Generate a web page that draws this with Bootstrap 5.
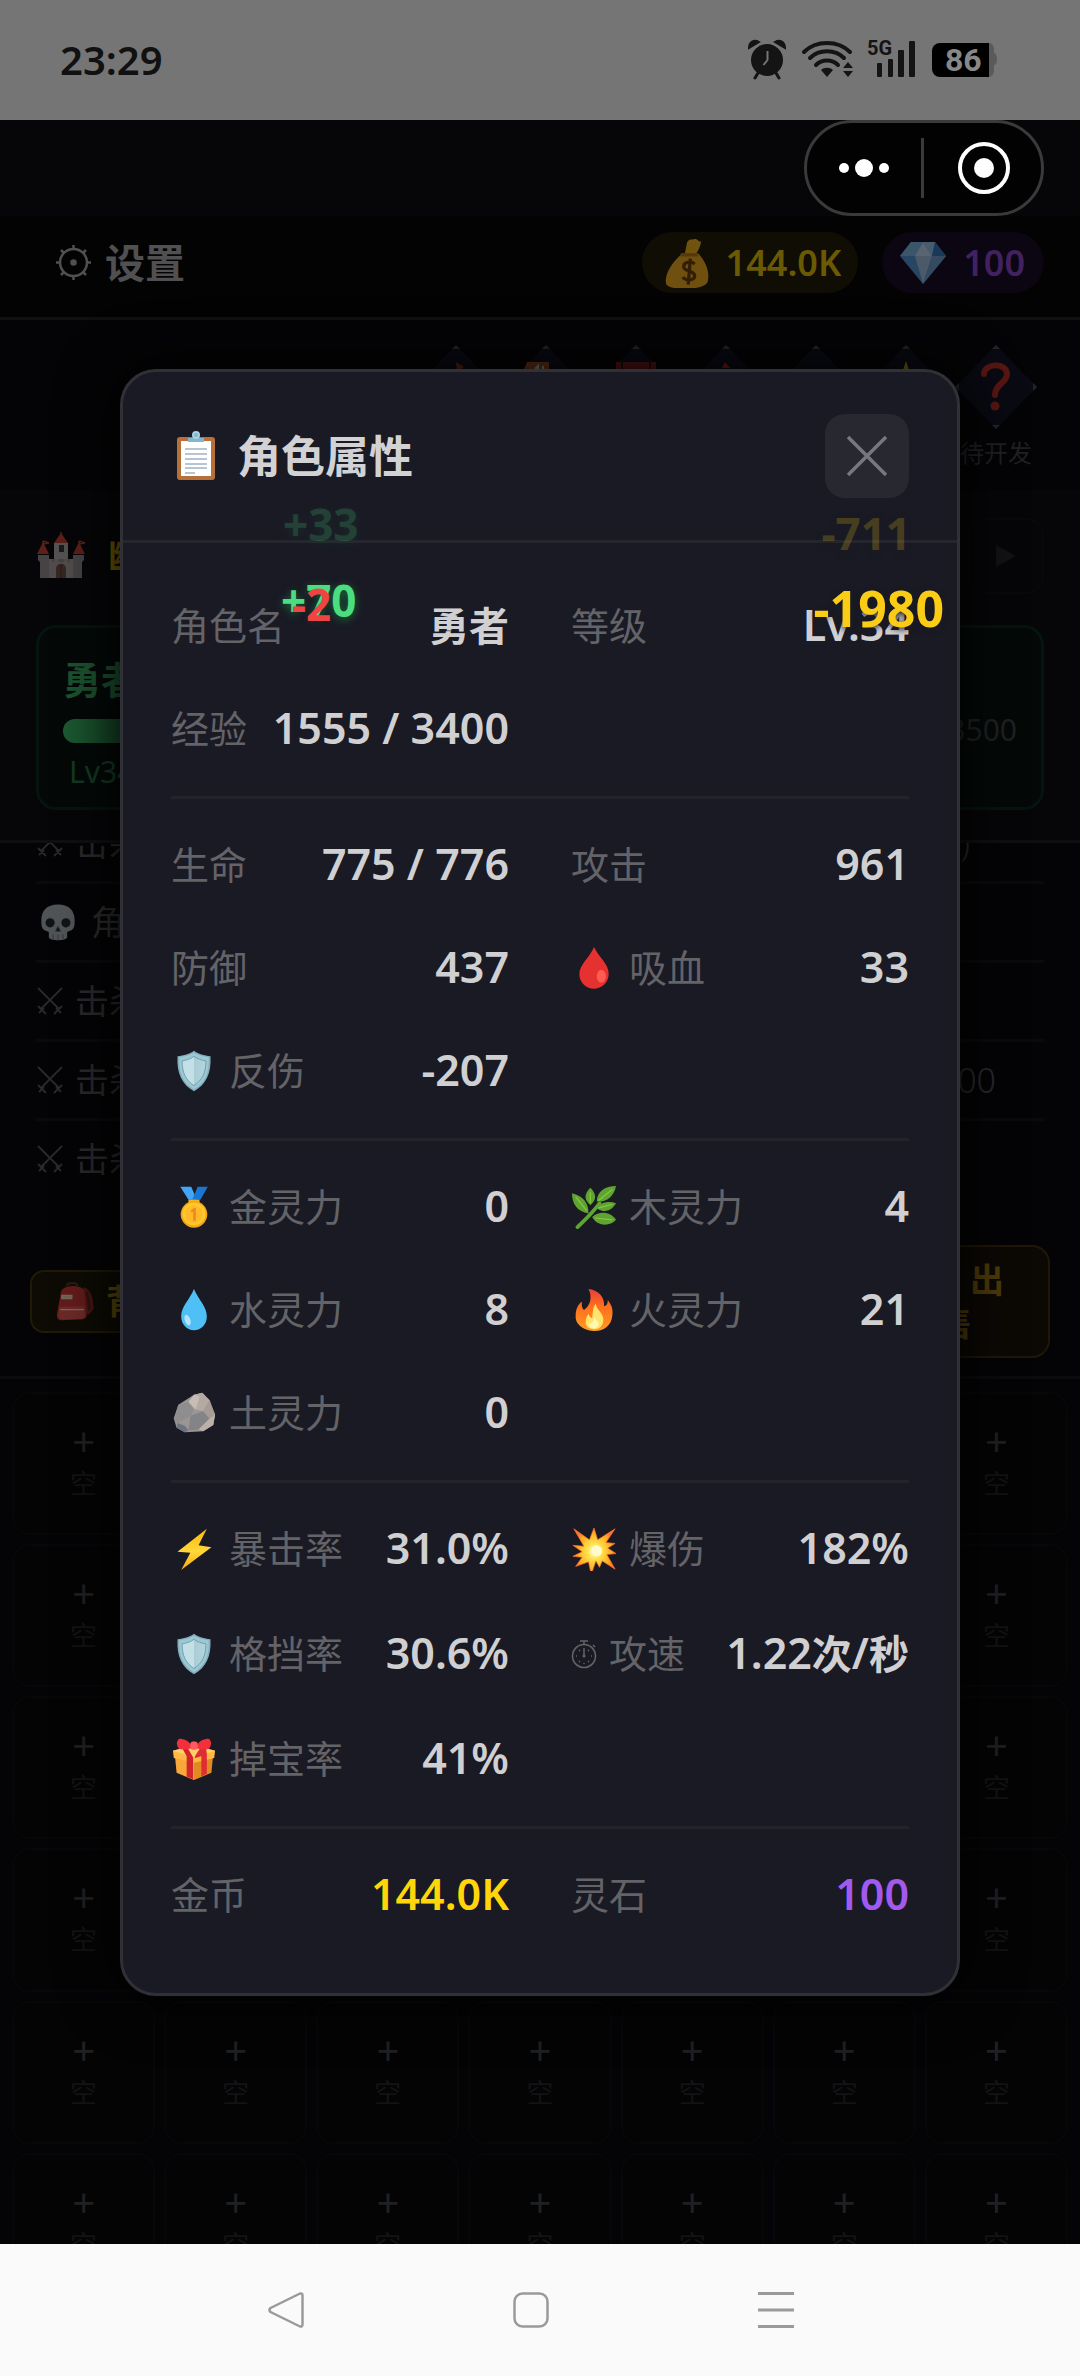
<!DOCTYPE html>
<html lang="zh-CN">
<head>
<meta charset="utf-8">
<meta name="viewport" content="width=device-width, initial-scale=1">
<title>角色属性</title>
<link href="https://cdn.jsdelivr.net/npm/bootstrap@5.3.0/dist/css/bootstrap.min.css" rel="stylesheet">
<style>
body{height:100vh;background:#040406;font-family:"Noto Sans","Noto Sans CJK SC",sans-serif;color:#4a4a4c;overflow:hidden}
svg{display:block;flex:none}
button{font-family:inherit}
.status-bar{height:120px;background:#757575;color:#111;padding:0 79px 0 60px}
.clock{font-size:40px;font-weight:600;line-height:40px}
.game{flex:1 1 0;min-height:0;overflow:hidden;position:relative}
.game-page>*{flex-shrink:0}
.capsule-row{background:#060609;padding-right:36px}
.capsule{width:240px;height:96px;border:3px solid #3a3a3a;border-radius:48px;background:#020202}
.top-row{background:#030304;border-bottom:3px solid #101013;padding:16px 36px 24px 54px}
.plain-btn{background:none;border:0;padding:0;color:#505052;font-size:40px;font-weight:700;line-height:61px;gap:12px}
.pill{height:61px;border-radius:31px;font-size:36px;font-weight:600;gap:16px}
.pill-gold{background:#100d04;color:#6b5a04;padding:0 17px 0 20px}
.pill-gem{background:#0b0611;color:#41215f;padding:0 19px 0 17px}
.dim{opacity:.42}
.quests{gap:8px;padding:25px 43px 0 0;height:170px}
.quest{width:82px}
.quest span{font-size:24px;line-height:24px;color:#202022;white-space:nowrap;margin-top:12px}
.battle{background:#060608;padding:28px 36px 30px;border-bottom:3px solid #0f0f12}
.place{font-size:36px;font-weight:700;color:#6b5a04;gap:22px}
.next-btn{width:76px;height:76px;border:2px solid #09090b;border-radius:18px;background:#060608;color:#121214;padding:0}
.fighter{margin-top:31px;height:185px;border:3px solid #06140f;border-radius:20px;background:#040908;padding:12px 24px 0}
.fighter-name{font-size:38px;font-weight:700;line-height:36px;color:#1c5230}
.hp{height:24px;border-radius:12px;width:400px;background:#08130d;margin:22px 0 14px}
.hp .progress-bar{background:linear-gradient(90deg,#1c5a32 0,#123f22 20%)}
.fighter-level{font-size:30px;line-height:30px;color:#143a22;padding-left:6px}
.fighter-exp{font-size:30px;color:#202022;padding-top:12px}
.logs{height:357px;overflow:hidden;padding:0 36px}
.logs li{height:79px;flex:none;border-bottom:3px solid #0a0a0c;font-size:34px;color:#2a2a2c;gap:11px}
.logs li:last-child{border-bottom-color:transparent}
.logs .tail{margin-left:auto;font-size:34px;font-weight:300;padding-right:48px}
.logs .tail-far{padding-right:74px}
.tools{padding:45px 30px 18px;border-bottom:3px solid #0b0b0e}
.bag-btn{height:63px;border:2px solid #1f1b06;border-radius:14px;background:#0d0b04;color:#5a4a08;font-size:34px;font-weight:600;gap:10px;padding:0 24px}
.sell-btn{width:190px;height:113px;border:2px solid #1f1708;border-radius:18px;background:#0c0905;color:#4e3b09;font-size:34px;font-weight:600;line-height:43px;padding:0}
.bag{display:grid;grid-template-columns:repeat(7,1fr);gap:9px;padding:13px 12px}
.slot{aspect-ratio:1;border:2px solid #070709;border-radius:18px;background:#040405;color:#131315;font-size:27px;line-height:40px;padding-bottom:5px}
.slot b{font-size:40px;font-weight:400;line-height:46px;color:#202022}
.overlay{position:absolute;inset:0}
.sheet{width:calc(100% - 240px);max-width:840px;background:#1a1a24;border:3px solid #303036;border-radius:36px;box-shadow:0 0 60px #000;position:relative}
.sheet-head{padding:42px 48px;border-bottom:3px solid #26262f}
.sheet-title{font-size:44px;font-weight:700;line-height:84px;color:#d2d2d4;gap:16px;margin:0}
.close-btn{width:84px;height:84px;border:0;border-radius:20px;background:#282830;padding:0}
.sheet-body{padding:48px 48px 63px}
.stats{display:grid;grid-template-columns:1fr 1fr;column-gap:62px;row-gap:33px;padding-bottom:32px;margin:0 0 31px;border-bottom:3px solid #23232c}
.stats.tall{row-gap:35px}
.stats:last-child{border:0;padding:0;margin:0}
.stat{height:70px;white-space:nowrap}
.stat dt{font-size:38px;font-weight:400;color:#636368;gap:12px}
.stat dd{font-size:43px;font-weight:600;color:#d0d0d3;margin:0}
.stat .han{font-size:40px}
.stat .gold{color:#ffd60a}
.stat .violet{color:#a259f0}
.float-hit{position:absolute;font-weight:700;font-size:44px;line-height:44px}
.heal{color:#4ade80;text-shadow:0 2px 8px #16703a}
.hurt{color:#ef4444}
.crit{color:#facc15;font-size:50px;text-shadow:0 2px 6px #1a1a24}
.crit.faded{font-size:44px}
.faded{opacity:.2}
.hit-a{left:160px;top:130px}
.hit-b{left:158px;top:206px}
.hit-c{left:169px;top:210px}
.hit-d{right:46px;top:139px}
.hit-e{right:13px;top:214px}
.sys-nav{height:132px;background:#fafafa;gap:209px;padding-right:18px}
.sys-nav button{background:none;border:0;padding:0}
</style>
<script src="https://cdn.jsdelivr.net/npm/bootstrap@5.3.0/dist/js/bootstrap.bundle.min.js"></script>
</head>
<body class="d-flex flex-column">

<svg width="0" height="0" class="position-absolute" aria-hidden="true">
<defs>
<linearGradient id="gSteel" x1="0" x2="1"><stop offset="0" stop-color="#c3e0e7"/><stop offset=".5" stop-color="#c3e0e7"/><stop offset=".5" stop-color="#a9ccd5"/><stop offset="1" stop-color="#b5d5dd"/></linearGradient>
<linearGradient id="gFire" x1="0" x2="0" y1="0" y2="1"><stop offset="0" stop-color="#e53f3c"/><stop offset=".4" stop-color="#ff6d1c"/><stop offset="1" stop-color="#ff9b24"/></linearGradient>
<radialGradient id="gBoom"><stop offset="0" stop-color="#fffde0"/><stop offset=".35" stop-color="#ffe14a"/><stop offset=".8" stop-color="#ffab1f"/><stop offset="1" stop-color="#ff7a30"/></radialGradient>
<linearGradient id="gBolt" x1="0" x2="0" y1="0" y2="1"><stop offset="0" stop-color="#feb804"/><stop offset=".55" stop-color="#ffd83b"/><stop offset="1" stop-color="#fca80c"/></linearGradient>
</defs>
<symbol id="e-clip" viewBox="0 0 48 52"><rect x="5" y="7" width="38" height="43" rx="3" fill="#b8703a"/><path d="M9 11h30v35H9z" fill="#fff"/><path d="M16 12V8h5c0-4 1-6 3-6s3 2 3 6h5v4z" fill="#82b6cc"/><circle cx="24" cy="5" r="3" fill="none" stroke="#a9d3e2" stroke-width="2"/><path d="M13 19h22M13 24h22M13 29h22M13 34h22M13 38h22M13 43h10" stroke="#9fb2c2" stroke-width="1.4"/></symbol>
<symbol id="e-shield" viewBox="0 0 48 48"><path d="M24 2c5 4 11 5 18 6 1 19-5 31-18 38C11 39 5 27 6 8c7-1 13-2 18-6z" fill="#84b0bd"/><path d="M24 4c5 3 10 4 16 5 1 17-4 28-16 35C12 37 7 26 8 9c6-1 11-2 16-5z" fill="#9cc8d4"/><path d="M24 8c4 3 8 4 13 5 0 13-4 21-13 27-9-6-13-14-13-27 5-1 9-2 13-5z" fill="url(#gSteel)" stroke="#6f9aa8" stroke-width="1"/></symbol>
<symbol id="e-blood" viewBox="0 0 48 48"><path d="M24 1c5 11 16 18 16 29a16 16 0 0 1-32 1C8 20 19 13 24 1z" fill="#e5312f"/><ellipse cx="32" cy="33" rx="5" ry="7" fill="#ff5b52"/></symbol>
<symbol id="e-water" viewBox="0 0 48 48"><path d="M24 1c5 12 14 19 14 30a14 15 0 0 1-28 0C10 20 19 13 24 1z" fill="#4fc0f5"/><ellipse cx="17" cy="35" rx="3" ry="6" transform="rotate(-20 17 35)" fill="#b3e5fc"/></symbol>
<symbol id="e-medal" viewBox="0 0 48 48"><path d="M9 2h12l6 14h-9z" fill="#42a5f5"/><path d="M39 2H28l-6 14h9z" fill="#1976d2"/><path d="M18 16h12v4H18z" fill="#f7b51c"/><circle cx="24" cy="32" r="14.500" fill="#f4a51c"/><circle cx="24" cy="31.500" r="12.500" fill="#ffca28"/><circle cx="24" cy="32" r="9.500" fill="#ffb92a"/><path d="M20.500 28l3.500-3h2v14h-3V29l-2 1z" fill="#ee8b1c"/></symbol>
<symbol id="e-herb" viewBox="0 0 48 48"><path d="M6 46C14 38 21 32 30 20" stroke="#5ea534" stroke-width="4" fill="none" stroke-linecap="round"/><g fill="#5fa332"><path d="M48 1c-12 0-21 6-21 17 11 1 19-6 21-17z"/><path d="M20 3c-7 7-7 13 0 19 7-6 7-12 0-19z"/><path d="M0 9c0 12 6 20 18 22 0-12-6-19-18-22z"/><path d="M48 20c-8-3-17-1-21 5 7 6 16 4 21-5z"/><path d="M48 38c-6-9-18-10-26-3 5 10 19 11 26 3z"/></g><path d="M44 5L29 17M20 8v12M4 13l12 15M44 21l-15 4M44 38l-19-2" stroke="#8cc63f" stroke-width="1.300" fill="none"/></symbol>
<symbol id="e-fire" viewBox="0 0 48 48"><path d="M18 1c10 1 18 8 17 19 3-1 4-3 4-7 4 5 6 10 5 17-1 11-9 17-19 17S3 41 4 30c0-7 3-13 7-15-1 4 0 7 2 9 8-6 9-15 5-23z" fill="url(#gFire)"/><path d="M26 17c0 7 10 11 8 20-1 5-5 8-10 8s-10-3-9-9c0-4 2-6 3-8 1 3 2 4 4 5 1-6 0-10 4-16z" fill="#ffe36b"/><path d="M24 31c1 4 6 5 5 9-1 3-3 4-5 4-3 0-6-2-5-6 2 2 5-1 5-7z" fill="#fff8b5"/></symbol>
<symbol id="e-rock" viewBox="0 0 48 48"><path d="M2 30L7 15 24 4l9-2 8 8 6 16-2 11-11 7-20 1L5 40z" fill="#9c9692"/><path d="M24 4l9-2 8 8-7 12-10-2-6-8z" fill="#b4aaa4"/><path d="M7 15l11-3 6 8-4 7-14 8-4-5z" fill="#8f8e8e"/><path d="M18 12l6-8 6 2-4 14z" fill="#c7bdb6"/><path d="M20 27l14-5 7 8-12 12-11 1z" fill="#828487"/><path d="M41 10l6 16-6 4-7-8z" fill="#a79c95"/><path d="M41 30l6-4-2 11-11 7-5-2z" fill="#bcb0a7"/><path d="M5 40l1-5 8 3 4 5-4 2z" fill="#6b7480"/></symbol>
<symbol id="e-bolt" viewBox="0 0 48 48"><path d="M38 2L6 27l14 1-10 19 33-25-14-2z" fill="url(#gBolt)"/></symbol>
<symbol id="e-boom" viewBox="0 0 48 48"><path d="M24 1l4 13L47 2 37 17l10 1-8 5 9 6-10 1 9 16-14-9-3 7-4-7-5 15-3-14-14 5 7-10-10-1 10-5-10-7 12 1L2 2l17 12z" fill="url(#gBoom)" stroke="#ff6a2c" stroke-width=".8"/><circle cx="27" cy="26" r="6" fill="#fffbd0"/></symbol>
<symbol id="e-gift" viewBox="0 0 48 48"><path d="M3 18l21 6v23L5 39z" fill="#f9a63a"/><path d="M45 18l-21 6v23l19-8z" fill="#e28a22"/><path d="M1 15l23-6 23 6-1 8-22 5L2 23z" fill="#ffb843"/><path d="M1 15l23 7 23-7-23-6z" fill="#ffd06a"/><path d="M11 12l5-2 7 12v24l-7-3V21z" fill="#d3242d"/><path d="M37 12l-5-2-7 11v2l7-2v22l6-3V18z" fill="#e02c34"/><path d="M23 12c-4-8-10-10-15-10-4 3-3 8 0 11 5 1 10 0 15-1zM25 12c4-8 10-10 15-10 4 3 3 8 0 11-5 1-10 0-15-1z" fill="#f2303b"/><rect x="20" y="5" width="8" height="9" rx="3" fill="#ff5a5f"/></symbol>
<symbol id="e-watch" viewBox="0 0 26 30"><circle cx="13" cy="17" r="11.500" fill="none" stroke="currentColor" stroke-width="1.600"/><path d="M13 5V2M9 2h8M22 6l2 2M13 9v8M5 17h1M20 17h1M13 24v1M8 11l1 1M18 11l-1 1M8 23l1-1M18 23l-1-1" stroke="currentColor" stroke-width="1.500"/><circle cx="13" cy="17" r="1.500" fill="currentColor"/></symbol>
<symbol id="e-bagmoney" viewBox="4 0 42 46"><path d="M24 14L26 4c2-4 5-2 7-3 3-1 3 3 6 2-1 5-2 8-6 13z" fill="#f2b51f"/><path d="M22 14h14c7 7 11 17 9 26-2 8-32 9-38 3-3-9 6-22 15-29z" fill="#f4ad1c"/><path d="M20 14h16v3H20z" fill="#b97314"/><path d="M33 24c-3-3-11-2-10 3 1 4 10 3 10 8 0 4-8 5-11 1M29 19l-2 24" stroke="#5f3708" stroke-width="3" fill="none"/></symbol>
<symbol id="e-gem" viewBox="0 2 48 46"><path d="M12 4h24l11 14-23 28L1 18z" fill="#4f9fd4"/><path d="M12 4h12l-8 14H1z" fill="#7fc4e8"/><path d="M24 4l9 14H16z" fill="#c5e6f5"/><path d="M24 4h12l-3 14z" fill="#9dd2ee"/><path d="M16 18h17l-9 28z" fill="#a5cbe0"/><path d="M33 18h14L24 46z" fill="#6aa9d0"/><path d="M36 4l11 14H33z" fill="#2f7fc0"/></symbol>
<symbol id="e-castle" viewBox="0 0 48 48"><path d="M24 1l7 10H17zM6 10l6 12H0zM42 10l6 12H36z" fill="#d8432f"/><path d="M24 0v3M6 9v4M6 9l6 2-6 1M42 9v4M42 9l6 2-6 1" stroke="#c3432f" stroke-width="1.500"/><path d="M17 11h14v18H17z" fill="#c3bcb8"/><path d="M1 23h11v4h24v-4h11v5l-2 2v16H3V30l-2-2z" fill="#9d9794"/><path d="M12 27h3v3h3v-3h3v3h6v-3h3v3h3v-3h3v19H12z" fill="#b7afab"/><path d="M22 13h5v7h-5z" fill="#353b40"/><path d="M19 46V37c0-7 10-7 10 0v9z" fill="#7b5347"/><path d="M24 33v13" stroke="#553a32"/></symbol>
<symbol id="e-skull" viewBox="0 0 48 48"><path d="M24 3C10 3 4 11 4 22c0 5 0 10 4 12l5 2v7c3 4 19 4 22 0v-7l5-2c4-2 4-7 4-12C44 11 38 3 24 3z" fill="#b9c3c6"/><circle cx="14.500" cy="25" r="5.500" fill="#26292b"/><circle cx="33.500" cy="25" r="5.500" fill="#26292b"/><path d="M24 29l3 6h-6zM18 39v6M24 39v7M30 39v6" fill="#26292b" stroke="#626b6e"/></symbol>
<symbol id="e-swords" viewBox="0 0 28 30"><path d="M2 2l21 21M26 2L5 23M2 20l8 8M26 20l-8 8M3 27l5-5M25 27l-5-5" stroke="currentColor" stroke-width="1.800" fill="none"/></symbol>
<symbol id="e-pack" viewBox="2 0 46 48"><path d="M34 6c9 3 12 14 12 27l-6 6-6-5z" fill="#9e2027"/><path d="M37 12c4 6 4 14 4 22" stroke="#4f2126" stroke-width="3" fill="none"/><path d="M7 12C8 3 33 2 35 11l3 28c0 4-3 6-8 6L8 46c-5 0-6-3-6-7z" fill="#d8343a"/><path d="M5 30l29-1 2 11c0 3-2 4-5 4l-22 1c-4 0-5-2-5-5z" fill="#f0555a"/><path d="M6 33h29M8 16h12v4H8z" stroke="#fff0d0" stroke-width="1.500" fill="#f8d7c8"/><path d="M14 5c1-5 12-5 13 0" stroke="#45312e" stroke-width="3" fill="none"/></symbol>
<symbol id="rhomb" viewBox="0 0 82 84"><path d="M41 0l41 42-41 42L0 42z" fill="#090a12"/><path d="M41 0l4 4h-8zM41 84l4-4h-8zM0 42l4-4v8zM82 42l-4-4v8z" fill="#242428"/></symbol>
</svg>

<header class="status-bar d-flex align-items-center justify-content-between flex-shrink-0">
<span class="clock">23:29</span>
<svg width="254" height="44" viewBox="0 0 254 44" role="img" aria-label="状态">
<g fill="#141414">
<circle cx="20" cy="22" r="16"/><path d="M2 10C2 4 7 1 12 4zM38 10C38 4 33 1 28 4z" stroke="#141414" stroke-width="2"/>
<path d="M11 35l-3 5M29 35l3 5" stroke="#141414" stroke-width="3" stroke-linecap="round"/>
<path d="M20.500 13v9l-4 5" stroke="#757575" stroke-width="2" fill="none"/>
<g fill="none" stroke="#141414" stroke-width="4" stroke-linecap="round"><path d="M57 14c12-12 34-12 46 0M63 20c9-9 25-9 34 0M69 27c6-6 16-6 22 0"/></g>
<path d="M74 32c3-3 9-3 12 0l-6 7zM101 24l5 6h-10zM101 39l5-6h-10z"/>
<rect x="130" y="25" width="5" height="14" rx="1"/><rect x="141" y="21" width="5" height="18" rx="1"/><rect x="151" y="12" width="6" height="27" rx="1"/><rect x="162" y="3" width="6" height="36" rx="1"/>
</g>
<text x="120" y="17" font-size="20" font-weight="700" fill="#141414" font-family="Roboto,sans-serif">5G</text>
<path d="M238 5h4c3 0 5 3 5 6v4c4 0 4 12 0 12v5c0 4-2 7-6 7h-3z" fill="#5a5a5a"/>
<path d="M193 5h49v34h-49a8 8 0 0 1-8-8V13a8 8 0 0 1 8-8z" fill="#000"/>
<text x="198" y="33" font-size="32" font-weight="700" fill="#888" font-family="Roboto,sans-serif">86</text>
</svg>
</header>

<main class="game">
<div class="game-page h-100 d-flex flex-column">
<div class="capsule-row d-flex justify-content-end">
<div class="capsule d-flex align-items-center justify-content-center">
<svg width="234" height="90" viewBox="0 0 234 90" role="img" aria-label="小程序菜单"><g fill="#fff"><circle cx="37" cy="45" r="5"/><circle cx="57" cy="45" r="9"/><circle cx="77" cy="45" r="5"/><circle cx="177" cy="45" r="10"/></g><circle cx="177" cy="45" r="24" fill="none" stroke="#fff" stroke-width="4"/><path d="M115.500 15v60" stroke="#3a3a3a" stroke-width="3"/></svg>
</div>
</div>

<div class="top-row d-flex justify-content-between">
<button type="button" class="plain-btn d-flex align-items-center">
<svg width="39" height="39" viewBox="0 0 39 39" fill="none" stroke="currentColor" stroke-width="2.500"><circle cx="19.500" cy="19.500" r="13.500"/><circle cx="19.500" cy="19.500" r="2" fill="currentColor"/><path d="M19.500 6V2M19.500 33v4M6 19.500H2M33 19.500h4M10 10L7 7M29 10l3-3M10 29l-3 3M29 29l3 3"/></svg>设置</button>
<div class="d-flex gap-4">
<span class="pill pill-gold d-flex align-items-center"><svg class="dim" width="48" height="50"><use href="#e-bagmoney"/></svg>144.0K</span>
<span class="pill pill-gem d-flex align-items-center"><svg class="dim" width="48" height="46"><use href="#e-gem"/></svg>100</span>
</div>
</div>

<div class="quests d-flex justify-content-end">
<svg width="82" height="84"><use href="#rhomb"/><path d="M41 17l8 5-7 5z" fill="#54200f"/></svg>
<svg width="82" height="84"><use href="#rhomb"/><path d="M22 17h22v10H18z" fill="#5b2f16"/><path d="M30 24l3-3v3M38 21v3" stroke="#777" stroke-width="2" fill="none"/></svg>
<svg width="82" height="84"><use href="#rhomb"/><path d="M21 17h40v10H21z" fill="#4a1212"/><path d="M27 17v7M55 17v7" stroke="#1c0a0c" stroke-width="2"/></svg>
<svg width="82" height="84"><use href="#rhomb"/><path d="M37 23l3-6 5 6z" fill="#6a1616"/></svg>
<svg width="82" height="84"><use href="#rhomb"/></svg>
<svg width="82" height="84"><use href="#rhomb"/><path d="M41 16l3 9h-6z" fill="#6e5c08"/></svg>
<div class="quest d-flex flex-column align-items-center"><svg width="82" height="84"><use href="#rhomb"/><path d="M29 29c0-11 23-12 23 0 0 9-12 10-12 21" fill="none" stroke="#571612" stroke-width="6" stroke-linecap="round"/><circle cx="40" cy="61" r="4.500" fill="#571612"/></svg><span>待开发</span></div>
</div>

<section class="battle">
<div class="d-flex justify-content-between align-items-center">
<span class="place d-flex align-items-center"><svg class="dim" width="50" height="48"><use href="#e-castle"/></svg>幽</span>
<button type="button" class="next-btn d-flex align-items-center justify-content-center" aria-label="下一关"><svg width="20" height="22" viewBox="0 0 20 22"><path d="M0 0l20 11L0 22z" fill="currentColor"/></svg></button>
</div>
<div class="fighter d-flex align-items-center justify-content-between">
<div>
<div class="fighter-name">勇者</div>
<div class="progress hp" role="progressbar" aria-label="生命" aria-valuenow="99" aria-valuemin="0" aria-valuemax="100"><div class="progress-bar w-100"></div></div>
<div class="fighter-level">Lv34</div>
</div>
<span class="fighter-exp">3500</span>
</div>
</section>

<ul class="logs list-unstyled m-0 d-flex flex-column justify-content-end">
<li class="d-flex align-items-center"><svg width="28" height="30"><use href="#e-swords"/></svg>击杀<span class="tail tail-far">)</span></li>
<li class="d-flex align-items-center"><svg class="dim" width="44" height="40"><use href="#e-skull"/></svg>角色</li>
<li class="d-flex align-items-center"><svg width="28" height="30"><use href="#e-swords"/></svg>击杀</li>
<li class="d-flex align-items-center"><svg width="28" height="30"><use href="#e-swords"/></svg>击杀<span class="tail">00</span></li>
<li class="d-flex align-items-center"><svg width="28" height="30"><use href="#e-swords"/></svg>击杀</li>
</ul>

<div class="tools d-flex align-items-center justify-content-between">
<button type="button" class="bag-btn d-flex align-items-center"><svg class="dim" width="40" height="40"><use href="#e-pack"/></svg>背包</button>
<button type="button" class="sell-btn d-flex flex-column align-items-center justify-content-center"><span class="d-flex align-items-center gap-4"><svg class="dim" width="40" height="40"><use href="#e-bagmoney"/></svg>出</span><span>售</span></button>
</div>

<div class="bag" id="bag"></div>
</div>

<div class="overlay d-flex align-items-center justify-content-center">
<div class="sheet" role="dialog" aria-labelledby="sheetTitle">
<div class="sheet-head d-flex justify-content-between align-items-center">
<h1 class="sheet-title d-flex align-items-center" id="sheetTitle"><svg width="50" height="52"><use href="#e-clip"/></svg>角色属性</h1>
<button type="button" class="close-btn d-flex align-items-center justify-content-center" aria-label="关闭"><svg width="42" height="42" viewBox="0 0 42 42"><path d="M2 2l38 38M40 2L2 40" stroke="#77777c" stroke-width="3.500"/></svg></button>
</div>
<div class="sheet-body">
<dl class="stats">
<div class="stat d-flex align-items-center justify-content-between"><dt class="d-flex align-items-center">角色名</dt><dd class="han">勇者</dd></div>
<div class="stat d-flex align-items-center justify-content-between"><dt class="d-flex align-items-center">等级</dt><dd>Lv.34</dd></div>
<div class="stat d-flex align-items-center justify-content-between"><dt class="d-flex align-items-center">经验</dt><dd>1555 / 3400</dd></div>
</dl>
<dl class="stats">
<div class="stat d-flex align-items-center justify-content-between"><dt class="d-flex align-items-center">生命</dt><dd>775 / 776</dd></div>
<div class="stat d-flex align-items-center justify-content-between"><dt class="d-flex align-items-center">攻击</dt><dd>961</dd></div>
<div class="stat d-flex align-items-center justify-content-between"><dt class="d-flex align-items-center">防御</dt><dd>437</dd></div>
<div class="stat d-flex align-items-center justify-content-between"><dt class="d-flex align-items-center"><svg width="46" height="44"><use href="#e-blood"/></svg>吸血</dt><dd>33</dd></div>
<div class="stat d-flex align-items-center justify-content-between"><dt class="d-flex align-items-center"><svg width="46" height="44"><use href="#e-shield"/></svg>反伤</dt><dd>-207</dd></div>
</dl>
<dl class="stats">
<div class="stat d-flex align-items-center justify-content-between"><dt class="d-flex align-items-center"><svg width="46" height="44"><use href="#e-medal"/></svg>金灵力</dt><dd>0</dd></div>
<div class="stat d-flex align-items-center justify-content-between"><dt class="d-flex align-items-center"><svg width="46" height="44"><use href="#e-herb"/></svg>木灵力</dt><dd>4</dd></div>
<div class="stat d-flex align-items-center justify-content-between"><dt class="d-flex align-items-center"><svg width="46" height="44"><use href="#e-water"/></svg>水灵力</dt><dd>8</dd></div>
<div class="stat d-flex align-items-center justify-content-between"><dt class="d-flex align-items-center"><svg width="46" height="44"><use href="#e-fire"/></svg>火灵力</dt><dd>21</dd></div>
<div class="stat d-flex align-items-center justify-content-between"><dt class="d-flex align-items-center"><svg width="46" height="44"><use href="#e-rock"/></svg>土灵力</dt><dd>0</dd></div>
</dl>
<dl class="stats tall">
<div class="stat d-flex align-items-center justify-content-between"><dt class="d-flex align-items-center"><svg width="46" height="44"><use href="#e-bolt"/></svg>暴击率</dt><dd>31.0%</dd></div>
<div class="stat d-flex align-items-center justify-content-between"><dt class="d-flex align-items-center"><svg width="46" height="44"><use href="#e-boom"/></svg>爆伤</dt><dd>182%</dd></div>
<div class="stat d-flex align-items-center justify-content-between"><dt class="d-flex align-items-center"><svg width="46" height="44"><use href="#e-shield"/></svg>格挡率</dt><dd>30.6%</dd></div>
<div class="stat d-flex align-items-center justify-content-between"><dt class="d-flex align-items-center"><svg width="26" height="30"><use href="#e-watch"/></svg>攻速</dt><dd>1.22<span class="han">次</span>/<span class="han">秒</span></dd></div>
<div class="stat d-flex align-items-center justify-content-between"><dt class="d-flex align-items-center"><svg width="46" height="44"><use href="#e-gift"/></svg>掉宝率</dt><dd>41%</dd></div>
</dl>
<dl class="stats">
<div class="stat d-flex align-items-center justify-content-between"><dt class="d-flex align-items-center">金币</dt><dd class="gold">144.0K</dd></div>
<div class="stat d-flex align-items-center justify-content-between"><dt class="d-flex align-items-center">灵石</dt><dd class="violet">100</dd></div>
</dl>
</div>
<span class="float-hit heal faded hit-a">+33</span>
<span class="float-hit heal hit-b">+70</span>
<span class="float-hit hurt hit-c">-2</span>
<span class="float-hit crit faded hit-d">-711</span>
<span class="float-hit crit hit-e">-1980</span>
</div>
</div>
</main>

<nav class="sys-nav d-flex align-items-center justify-content-center flex-shrink-0">
<button type="button" aria-label="返回"><svg width="36" height="36" viewBox="0 0 36 36" fill="none" stroke="#9a9a9a" stroke-width="2.500" stroke-linejoin="round"><path d="M32 1.500q2.500-.5 2.500 2v29q0 2.500-2.500 2L2.500 20q-2-2 0-4z"/></svg></button>
<button type="button" aria-label="主页"><svg width="36" height="36" viewBox="0 0 36 36" fill="none" stroke="#9a9a9a" stroke-width="2.500"><rect x="1.500" y="1.500" width="33" height="33" rx="8"/></svg></button>
<button type="button" aria-label="最近任务"><svg width="36" height="36" viewBox="0 0 36 36" stroke="#9a9a9a" stroke-width="3"><path d="M0 1.500h36M0 18h36M0 34.500h36"/></svg></button>
</nav>

<script>
// Six rows of seven empty bag slots
document.getElementById('bag').innerHTML =
  '<div class="slot d-flex flex-column align-items-center justify-content-center"><b>+</b>空</div>'.repeat(42);
</script>
</body>
</html>
